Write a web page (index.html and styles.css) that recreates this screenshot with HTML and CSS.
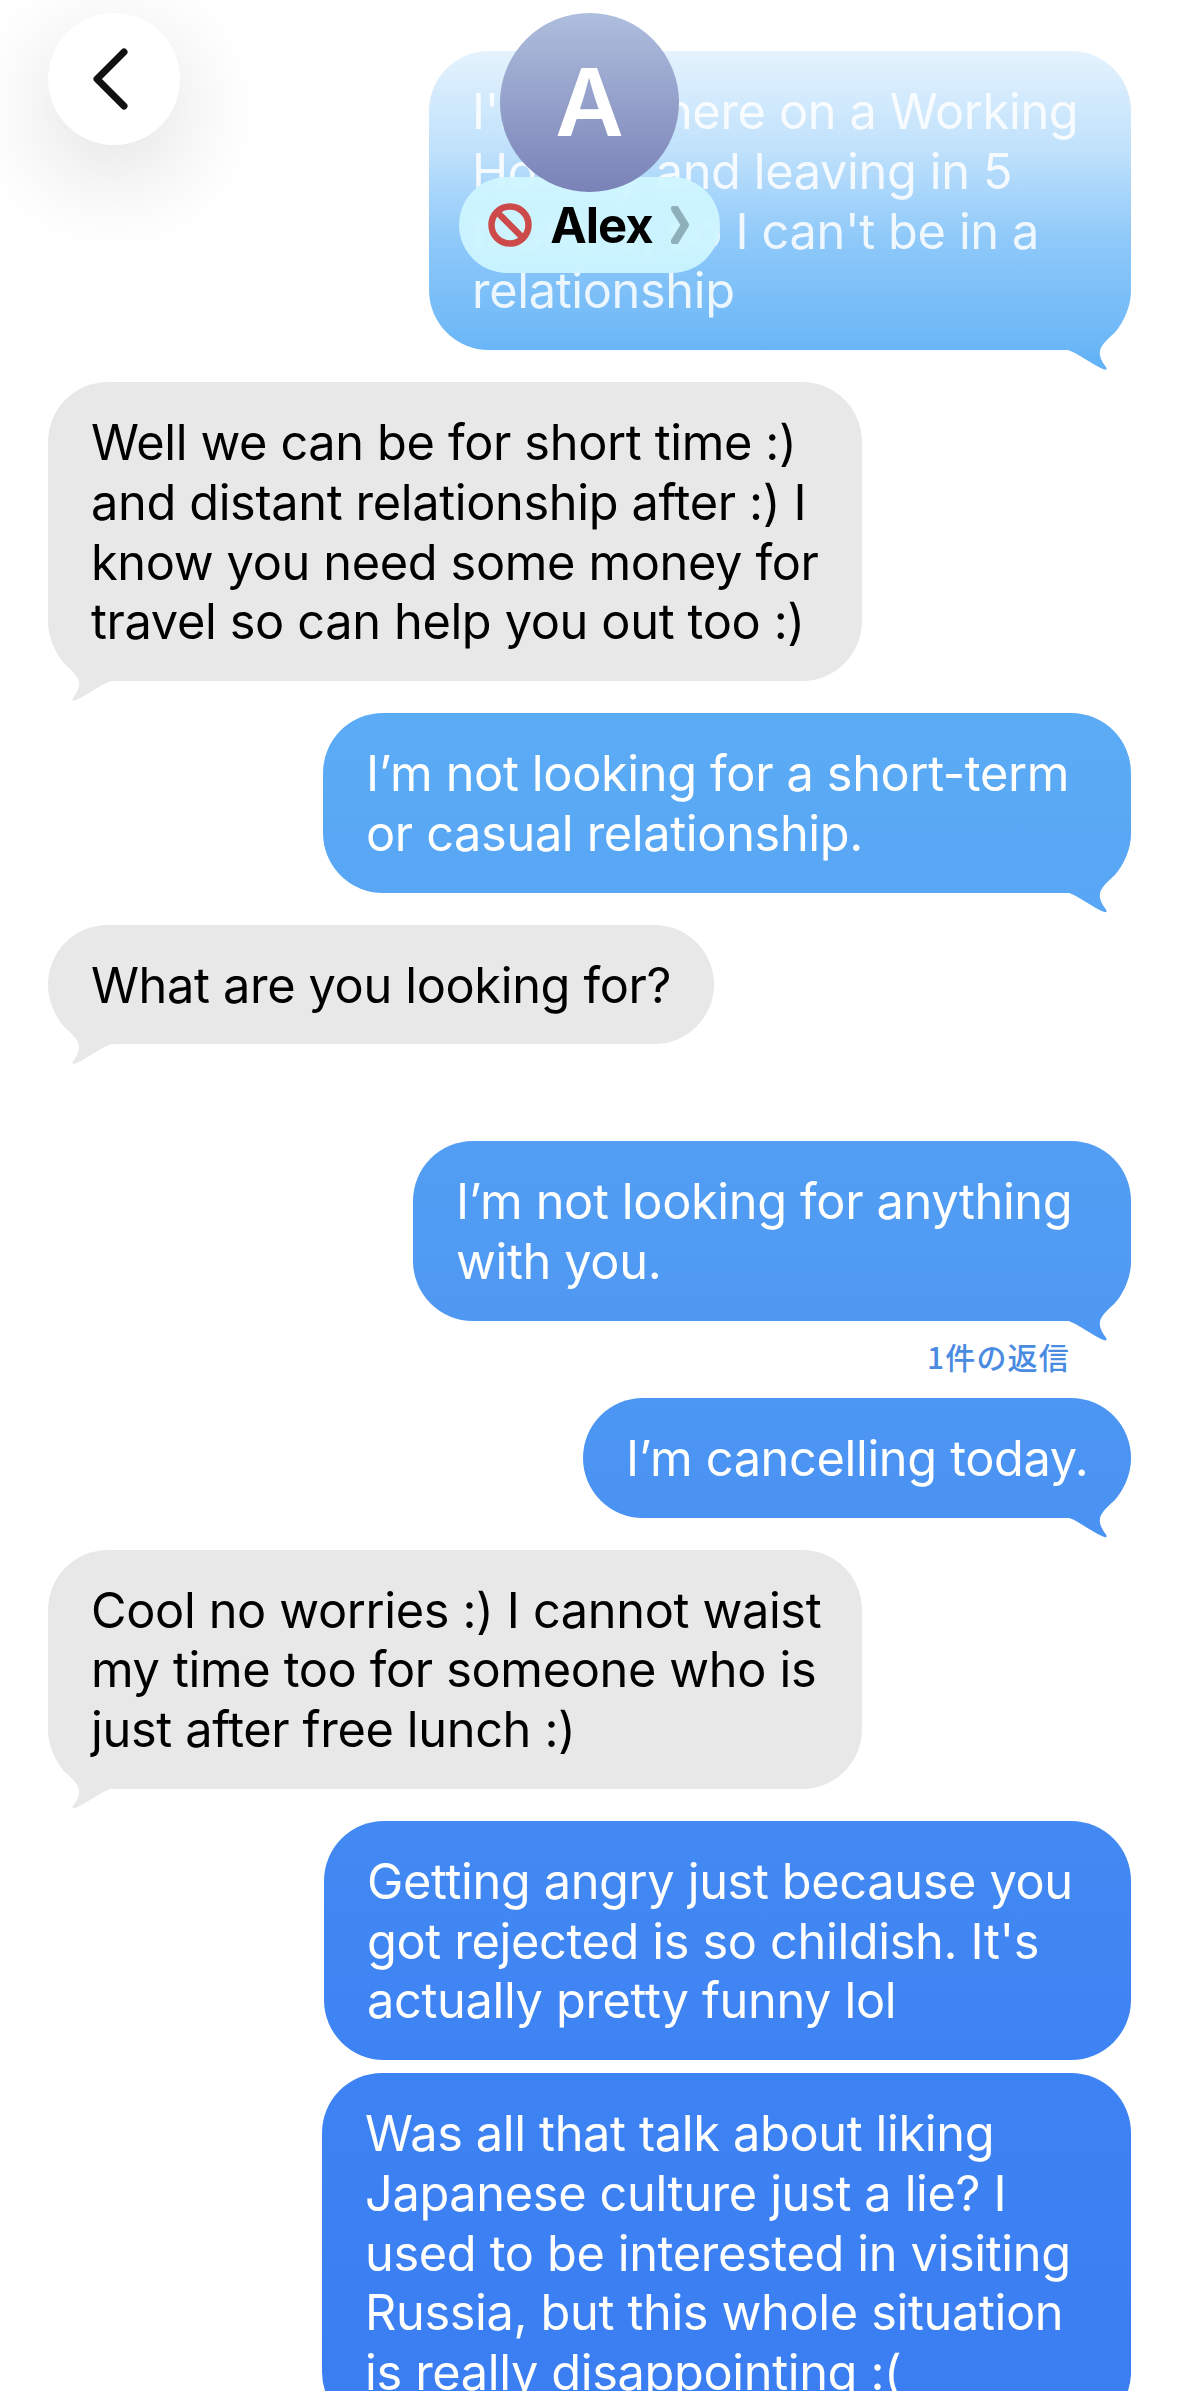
FILE: index.html
```html
<!DOCTYPE html>
<html lang="en">
<head>
	<meta charset="utf-8">
	<meta name="viewport" content="width=device-width,initial-scale=1">
	<title>Alex</title>
	<link rel="stylesheet" href="styles.css">
</head>
<body>
	<div class="chat">
		<p class="msg me faded w702">I'm only here on a Working<br>Holiday and leaving in 5<br>months, so I can't be in a<br>relationship</p>
		<p class="msg them w814">Well we can be for short time :)<br>and distant relationship after :) I<br>know you need some money for<br>travel so can help you out too :)</p>
		<p class="msg me w808">I’m not looking for a short-term<br>or casual relationship.</p>
		<p class="msg them w666">What are you looking for?</p>
		<p class="msg me gap w718">I’m not looking for anything<br>with you.</p>
		<p class="replies">1件の返信</p>
		<p class="msg me w548">I’m cancelling today.</p>
		<p class="msg them w814">Cool no worries :) I cannot waist<br>my time too for someone who is<br>just after free lunch :)</p>
		<p class="msg me notail w807">Getting angry just because you<br>got rejected is so childish. It's<br>actually pretty funny lol</p>
		<p class="msg me near w809">Was all that talk about liking<br>Japanese culture just a lie? I<br>used to be interested in visiting<br>Russia, but this whole situation<br>is really disappointing :(</p>
	</div>

	<div class="topbar">
		<a class="back">
			<svg width="40" height="64" viewBox="0 0 40 64"><path d="M34 5 L7 32 L34 59"/></svg>
		</a>
		<div class="contact">
			<div class="avatar">A</div>
			<div class="name">
				<svg class="blocked" width="44" height="44" viewBox="0 0 44 44"><circle cx="22" cy="22" r="18.5"/><path d="M9 9 L35 35"/></svg>
				<span>Alex</span>
				<svg class="more" width="18" height="38" viewBox="0 0 18 38"><path d="M4 3 L14 19 L4 35"/></svg>
			</div>
		</div>
	</div>
</body>
</html>
```

FILE: styles.css
```css
*{margin:0;padding:0;box-sizing:border-box;}
html,body{height:100%;overflow:hidden;background:#FFF;}
body{position:relative;font-family:Inter,"Noto Sans CJK JP",sans-serif;}

.chat{display:flex;flex-direction:column;align-items:flex-start;gap:32px;height:100vh;overflow:hidden;padding:51px 48px 0;}

.msg{position:relative;z-index:0;flex:none;padding:31px 0 29px 43px;border-radius:60px;font-size:48.7px;line-height:59.75px;letter-spacing:-0.35px;white-space:nowrap;}
.msg:after{content:'';position:absolute;z-index:-1;bottom:-20px;width:70px;height:80px;clip-path:path('M0 60 L6 60 C14 61 30 74 42 79 Q47 81 45 77 C41 72 38 66 39 61 C40 55 46 50 50 46 C60 38 68 22 70 0 L0 0 Z');}

.w548{width:548px;}
.w666{width:666px;}
.w702{width:702px;}
.w718{width:718px;}
.w807{width:807px;}
.w808{width:808px;}
.w809{width:809px;}
.w814{width:814px;}

/* blue runs down the whole window, like the real app */
.me,.me:after{background:linear-gradient(180deg,#6CBBF8 0,#5AA9F5 800px,#4F99F3 1300px,#4A93F3 1500px,#3E83F3 2050px,#3A7EF2 2391px) fixed;}
.me{align-self:flex-end;color:#FFF;}
.me:after{right:0;}
.faded{color:rgba(255,255,255,.86);}
.them,.them:after{background:#E8E8E8;}
.them{color:#000;}
.them:after{left:0;transform:scaleX(-1);}

.notail:after{display:none;}
.gap{margin-top:65px;}
.near{margin-top:-19px;}

.replies{align-self:flex-end;height:36px;margin:-15px 61px -8px 0;font-family:"Noto Sans CJK JP",sans-serif;font-size:30px;line-height:36px;font-weight:500;letter-spacing:1.2px;color:#4A8BE2;}

.topbar{position:absolute;top:0;left:0;right:0;height:360px;display:grid;grid-template-columns:1fr auto 1fr;align-items:start;padding:13px 48px 0;background:linear-gradient(180deg,rgba(255,255,255,.94) 0,rgba(255,255,255,.8) 60px,rgba(255,255,255,.58) 150px,rgba(255,255,255,.26) 240px,rgba(255,255,255,.06) 340px,rgba(255,255,255,0) 360px);}
.back{width:132px;height:132px;display:flex;align-items:center;justify-content:center;border-radius:50%;background:#FFF;box-shadow:0 30px 100px rgba(0,0,0,.14);}
.back svg{fill:none;stroke:#111;stroke-width:7;stroke-linecap:round;stroke-linejoin:round;margin-right:8px;}

.contact{grid-column:2;display:flex;flex-direction:column;align-items:center;}
.avatar{position:relative;z-index:1;width:179px;height:179px;border-radius:50%;background:linear-gradient(180deg,#AEBEDD,#7A82B7);color:#FFF;font-size:94px;font-weight:600;line-height:179px;text-align:center;}
.name{display:flex;align-items:center;gap:18px;height:96px;margin-top:-15px;padding:0 31px 0 29px;border-radius:48px;background:rgba(208,247,255,.9);backdrop-filter:blur(3px);color:#000;font-size:49px;font-weight:700;letter-spacing:-1px;}
.blocked{fill:none;stroke:#CD4A4A;stroke-width:6.5;}
.more{fill:none;stroke:#8FB0BA;stroke-width:8;stroke-linecap:round;stroke-linejoin:round;}
```
